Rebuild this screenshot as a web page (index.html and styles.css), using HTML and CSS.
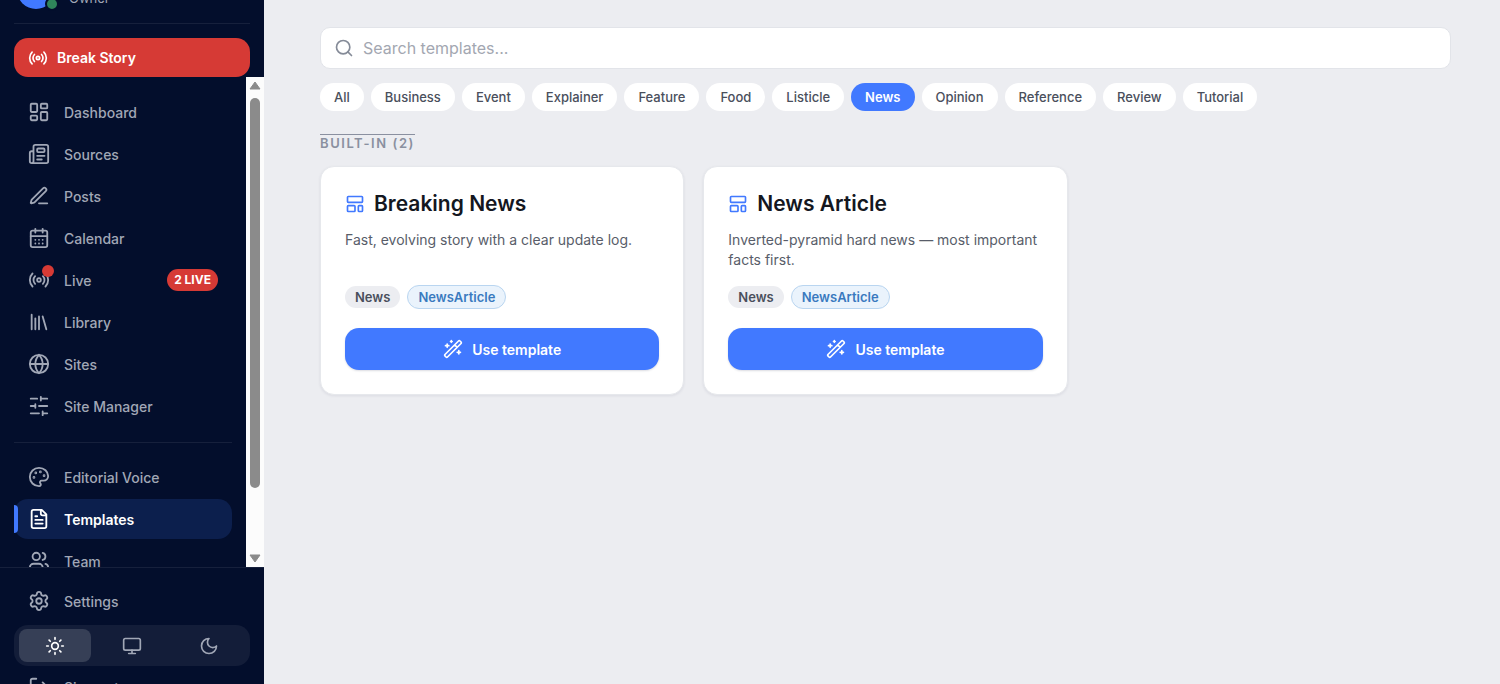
FILE: index.html
```html
<!DOCTYPE html>
<html lang="en">
<head>
    <meta charset="UTF-8">
    <meta name="viewport" content="width=device-width, initial-scale=1.0">
    <title>Templates</title>
    <link rel="stylesheet" href="styles.css">
</head>
<body>
    <div class="app">
        <aside class="sidebar">
            <!-- Signed-in user -->
            <div class="user">
                <div class="avatar"><span class="status"></span></div>
                <span class="role">Owner</span>
            </div>

            <button type="button" class="break-story">
                <svg class="icon icon-sm" viewBox="0 0 24 24"><path d="M16.247 7.761a6 6 0 0 1 0 8.478M19.075 4.933a10 10 0 0 1 0 14.134M4.925 19.067a10 10 0 0 1 0-14.134M7.753 16.239a6 6 0 0 1 0-8.478"/><circle cx="12" cy="12" r="2"/></svg>
                Break Story
            </button>

            <!-- Scrolling navigation -->
            <div class="nav-wrap">
                <nav class="nav">
                    <a href="#" class="nav-item">
                        <svg class="icon" viewBox="0 0 24 24"><rect width="7" height="9" x="3" y="3" rx="1"/><rect width="7" height="5" x="14" y="3" rx="1"/><rect width="7" height="9" x="14" y="12" rx="1"/><rect width="7" height="5" x="3" y="16" rx="1"/></svg>
                        Dashboard
                    </a>
                    <a href="#" class="nav-item">
                        <svg class="icon" viewBox="0 0 24 24"><path d="M15 18h-5M18 14h-8M4 22h16a2 2 0 0 0 2-2V4a2 2 0 0 0-2-2H8a2 2 0 0 0-2 2v16a2 2 0 0 1-4 0v-9a2 2 0 0 1 2-2h2"/><rect width="8" height="4" x="10" y="6" rx="1"/></svg>
                        Sources
                    </a>
                    <a href="#" class="nav-item">
                        <svg class="icon" viewBox="0 0 24 24"><path d="M12 20h9M16.376 3.622a1 1 0 0 1 3.002 3.002L7.368 18.635a2 2 0 0 1-.855.506l-2.872.838a.5.5 0 0 1-.62-.62l.838-2.872a2 2 0 0 1 .506-.854z"/></svg>
                        Posts
                    </a>
                    <a href="#" class="nav-item">
                        <svg class="icon" viewBox="0 0 24 24"><path d="M8 2v4M16 2v4M3 10h18M8 14h.01M12 14h.01M16 14h.01M8 18h.01M12 18h.01M16 18h.01"/><rect width="18" height="18" x="3" y="4" rx="2"/></svg>
                        Calendar
                    </a>
                    <a href="#" class="nav-item">
                        <span class="icon-wrap">
                            <svg class="icon" viewBox="0 0 24 24"><path d="M16.247 7.761a6 6 0 0 1 0 8.478M19.075 4.933a10 10 0 0 1 0 14.134M4.925 19.067a10 10 0 0 1 0-14.134M7.753 16.239a6 6 0 0 1 0-8.478"/><circle cx="12" cy="12" r="2"/></svg>
                            <span class="live-dot"></span>
                        </span>
                        Live
                        <span class="live-count">2 LIVE</span>
                    </a>
                    <a href="#" class="nav-item">
                        <svg class="icon" viewBox="0 0 24 24"><path d="m16 6 4 14M12 6v14M8 8v12M4 4v16"/></svg>
                        Library
                    </a>
                    <a href="#" class="nav-item">
                        <svg class="icon" viewBox="0 0 24 24"><circle cx="12" cy="12" r="10"/><path d="M12 2a14.5 14.5 0 0 0 0 20 14.5 14.5 0 0 0 0-20M2 12h20"/></svg>
                        Sites
                    </a>
                    <a href="#" class="nav-item">
                        <svg class="icon" viewBox="0 0 24 24"><path d="M21 4h-7M10 4H3M21 12h-9M8 12H3M21 20h-5M12 20H3M14 2v4M8 10v4M16 18v4"/></svg>
                        Site Manager
                    </a>
                    <hr class="nav-divider">
                    <a href="#" class="nav-item">
                        <svg class="icon" viewBox="0 0 24 24"><path d="M12 22a1 1 0 0 1 0-20 10 9 0 0 1 10 9 5 5 0 0 1-5 5h-2.25a1.75 1.75 0 0 0-1.4 2.8l.3.4a1.75 1.75 0 0 1-1.4 2.8z"/><g class="solid"><circle cx="13.5" cy="6.5" r=".5"/><circle cx="17.5" cy="10.5" r=".5"/><circle cx="6.5" cy="12.5" r=".5"/><circle cx="8.5" cy="7.5" r=".5"/></g></svg>
                        Editorial Voice
                    </a>
                    <a href="#" class="nav-item active">
                        <svg class="icon" viewBox="0 0 24 24"><path d="M15 2H6a2 2 0 0 0-2 2v16a2 2 0 0 0 2 2h12a2 2 0 0 0 2-2V7ZM14 2v4a2 2 0 0 0 2 2h4M10 9H8M16 13H8M16 17H8"/></svg>
                        Templates
                    </a>
                    <a href="#" class="nav-item">
                        <svg class="icon" viewBox="0 0 24 24"><path d="M16 21v-2a4 4 0 0 0-4-4H6a4 4 0 0 0-4 4v2M16 3.128a4 4 0 0 1 0 7.744M22 21v-2a4 4 0 0 0-3-3.87"/><circle cx="9" cy="7" r="4"/></svg>
                        Team
                    </a>
                </nav>
                <div class="scrollbar">
                    <svg class="arrow" viewBox="0 0 12 9"><path d="M6 1 11 8H1z"/></svg>
                    <div class="thumb"></div>
                    <svg class="arrow" viewBox="0 0 12 9"><path d="M6 8 1 1h10z"/></svg>
                </div>
            </div>

            <div class="sidebar-footer">
                <a href="#" class="nav-item">
                    <svg class="icon" viewBox="0 0 24 24"><path d="M9.671 4.136a2.34 2.34 0 0 1 4.659 0 2.34 2.34 0 0 0 3.319 1.915 2.34 2.34 0 0 1 2.33 4.033 2.34 2.34 0 0 0 0 3.831 2.34 2.34 0 0 1-2.33 4.033 2.34 2.34 0 0 0-3.319 1.915 2.34 2.34 0 0 1-4.659 0 2.34 2.34 0 0 0-3.32-1.915 2.34 2.34 0 0 1-2.33-4.033 2.34 2.34 0 0 0 0-3.831A2.34 2.34 0 0 1 6.35 6.051a2.34 2.34 0 0 0 3.319-1.915"/><circle cx="12" cy="12" r="3"/></svg>
                    Settings
                </a>
                <div class="theme-switch">
                    <button type="button" class="theme-btn selected" aria-label="Light">
                        <svg class="icon icon-sm" viewBox="0 0 24 24"><circle cx="12" cy="12" r="4"/><path d="M12 2v2M12 20v2M4.93 4.93l1.41 1.41M17.66 17.66l1.41 1.41M2 12h2M20 12h2M6.34 17.66l-1.41 1.41M19.07 4.93l-1.41 1.41"/></svg>
                    </button>
                    <button type="button" class="theme-btn" aria-label="System">
                        <svg class="icon icon-sm" viewBox="0 0 24 24"><rect width="20" height="14" x="2" y="3" rx="2"/><path d="M8 21h8M12 17v4"/></svg>
                    </button>
                    <button type="button" class="theme-btn" aria-label="Dark">
                        <svg class="icon icon-sm" viewBox="0 0 24 24"><path d="M12 3a6 6 0 0 0 9 9 9 9 0 1 1-9-9Z"/></svg>
                    </button>
                </div>
                <a href="#" class="nav-item">
                    <svg class="icon" viewBox="0 0 24 24"><path d="m16 17 5-5-5-5M21 12H9M9 21H5a2 2 0 0 1-2-2V5a2 2 0 0 1 2-2h4"/></svg>
                    Sign out
                </a>
            </div>
        </aside>

        <main class="content">
            <label class="search">
                <svg class="icon icon-sm" viewBox="0 0 24 24"><path d="m21 21-4.34-4.34"/><circle cx="11" cy="11" r="8"/></svg>
                <input type="search" placeholder="Search templates..." aria-label="Search templates">
            </label>

            <!-- Category filters -->
            <div class="filters">
                <button type="button" class="filter">All</button>
                <button type="button" class="filter">Business</button>
                <button type="button" class="filter">Event</button>
                <button type="button" class="filter">Explainer</button>
                <button type="button" class="filter">Feature</button>
                <button type="button" class="filter">Food</button>
                <button type="button" class="filter">Listicle</button>
                <button type="button" class="filter selected">News</button>
                <button type="button" class="filter">Opinion</button>
                <button type="button" class="filter">Reference</button>
                <button type="button" class="filter">Review</button>
                <button type="button" class="filter">Tutorial</button>
            </div>

            <h2 class="section-title">Built-in (2)</h2>

            <div class="cards">
                <article class="card">
                    <h3 class="card-title">
                        <svg class="icon icon-sm" viewBox="0 0 24 24"><rect width="18" height="7" x="3" y="3" rx="1"/><rect width="9" height="7" x="3" y="14" rx="1"/><rect width="5" height="7" x="16" y="14" rx="1"/></svg>
                        Breaking News
                    </h3>
                    <p class="card-text">Fast, evolving story with a clear update log.</p>
                    <div class="tags">
                        <span class="tag">News</span>
                        <span class="tag tag-schema">NewsArticle</span>
                    </div>
                    <button type="button" class="use-btn">
                        <svg class="icon icon-sm" viewBox="0 0 24 24"><path d="m21.64 3.64-1.28-1.28a1.21 1.21 0 0 0-1.72 0L2.36 18.64a1.21 1.21 0 0 0 0 1.72l1.28 1.28a1.2 1.2 0 0 0 1.72 0L21.64 5.36a1.2 1.2 0 0 0 0-1.72M14 7l3 3M5 6v4M19 14v4M10 2v2M7 8H3M21 16h-4M11 3H9"/></svg>
                        Use template
                    </button>
                </article>
                <article class="card">
                    <h3 class="card-title">
                        <svg class="icon icon-sm" viewBox="0 0 24 24"><rect width="18" height="7" x="3" y="3" rx="1"/><rect width="9" height="7" x="3" y="14" rx="1"/><rect width="5" height="7" x="16" y="14" rx="1"/></svg>
                        News Article
                    </h3>
                    <p class="card-text">Inverted-pyramid hard news — most important facts first.</p>
                    <div class="tags">
                        <span class="tag">News</span>
                        <span class="tag tag-schema">NewsArticle</span>
                    </div>
                    <button type="button" class="use-btn">
                        <svg class="icon icon-sm" viewBox="0 0 24 24"><path d="m21.64 3.64-1.28-1.28a1.21 1.21 0 0 0-1.72 0L2.36 18.64a1.21 1.21 0 0 0 0 1.72l1.28 1.28a1.2 1.2 0 0 0 1.72 0L21.64 5.36a1.2 1.2 0 0 0 0-1.72M14 7l3 3M5 6v4M19 14v4M10 2v2M7 8H3M21 16h-4M11 3H9"/></svg>
                        Use template
                    </button>
                </article>
            </div>
        </main>
    </div>
</body>
</html>
```
FILE: styles.css
```css
* {
    box-sizing: border-box;
}
body {
    margin: 0;
    font-family: Inter, "Liberation Sans", sans-serif;
    background: #ecedf1;
    color: #14171f;
}
button, input {
    font-family: inherit;
}
button {
    border: none;
    cursor: pointer;
}
.app {
    display: flex;
    height: 100vh;
}
.icon {
    display: block;
    flex: none;
    width: 22px;
    height: 22px;
    fill: none;
    stroke: currentColor;
    stroke-width: 2;
    stroke-linecap: round;
    stroke-linejoin: round;
}
.icon-sm {
    width: 20px;
    height: 20px;
}
.icon .solid {
    fill: currentColor;
}

/* Sidebar */
.sidebar {
    display: flex;
    flex-direction: column;
    flex: none;
    width: 264px;
    overflow: hidden;
    background: #030e2c;
    color: #a1a7b6;
}
.user {
    display: flex;
    flex: none;
    align-items: flex-end;
    gap: 14px;
    height: 56px;
    margin: -32px 14px 14px;
    padding: 0 3px 14px;
    border-bottom: 1px solid #16203c;
    font-size: 13px;
    line-height: 22px;
}
.avatar {
    position: relative;
    width: 38px;
    height: 38px;
    border-radius: 50%;
    background: #4179ff;
}
.status {
    position: absolute;
    right: -4px;
    bottom: -2px;
    width: 14px;
    height: 14px;
    border: 2px solid #030e2c;
    border-radius: 50%;
    background: #2f855a;
}
.break-story {
    display: flex;
    flex: none;
    align-items: center;
    gap: 9px;
    height: 39px;
    margin: 0 14px;
    padding: 0 14px;
    border-radius: 14px;
    background: #d63a35;
    color: #fff;
    font-size: 14px;
    font-weight: 600;
}
.nav-wrap {
    display: flex;
    flex: 1;
    min-height: 0;
}
.nav {
    display: flex;
    flex: 1;
    flex-direction: column;
    gap: 2px;
    overflow: hidden;
    padding: 15px 14px 0;
}
.nav-item {
    position: relative;
    display: flex;
    flex: none;
    align-items: center;
    gap: 14px;
    height: 40px;
    padding: 0 14px;
    border-radius: 14px;
    color: inherit;
    font-size: 14px;
    font-weight: 500;
    text-decoration: none;
}
.nav-item.active {
    background: #0c1f4d;
    color: #fff;
    font-weight: 600;
}
.nav-item.active::before {
    content: "";
    position: absolute;
    left: 0;
    top: 6px;
    width: 4px;
    height: 28px;
    border-radius: 0 4px 4px 0;
    background: #4179ff;
}
.nav-divider {
    flex: none;
    width: 100%;
    height: 1px;
    margin: 14px 0 12px;
    border: none;
    background: #16203c;
}
.icon-wrap {
    position: relative;
}
.live-dot {
    position: absolute;
    top: -4px;
    right: -4px;
    width: 12px;
    height: 12px;
    border-radius: 50%;
    background: #d63a35;
}
.live-count {
    margin-left: auto;
    padding: 0 7px;
    border-radius: 11px;
    background: #d63a35;
    color: #fff;
    font-size: 12px;
    font-weight: 700;
    line-height: 22px;
}
.scrollbar {
    display: flex;
    flex: none;
    flex-direction: column;
    align-items: center;
    width: 18px;
    padding: 4px 0;
    background: #fcfcfc;
}
.arrow {
    flex: none;
    width: 12px;
    height: 9px;
    fill: #8b8b8b;
    stroke: #8b8b8b;
    stroke-linejoin: round;
}
.thumb {
    width: 10px;
    height: 81%;
    margin: 8px 0 auto;
    border-radius: 5px;
    background: #8b8b8b;
}
.sidebar-footer {
    flex: none;
    height: 117px;
    padding: 13px 14px 0;
    border-top: 1px solid #16203c;
}
.theme-switch {
    display: flex;
    gap: 5px;
    margin: 4px 0 1px;
    padding: 4px 5px;
    border-radius: 14px;
    background: #131d39;
}
.theme-btn {
    display: flex;
    flex: 1;
    align-items: center;
    justify-content: center;
    height: 33px;
    border-radius: 8px;
    background: none;
    color: #a1a7b6;
}
.theme-btn.selected {
    background: #363f56;
    color: #fff;
}

/* Main content */
.content {
    flex: 1;
    min-width: 0;
    padding: 27px 49px 0 56px;
}
.search {
    display: flex;
    align-items: center;
    gap: 9px;
    height: 42px;
    padding: 0 13px;
    border: 1px solid #e2e4e9;
    border-radius: 10px;
    background: #fff;
    color: #858b98;
}
.search input {
    flex: 1;
    min-width: 0;
    padding: 0;
    border: none;
    outline: none;
    background: none;
    color: #14171f;
    font-size: 16px;
}
.search input::placeholder {
    color: #a3a7b1;
}
.filters {
    display: flex;
    flex-wrap: wrap;
    gap: 7px;
    margin-top: 14px;
}
.filter {
    height: 28px;
    padding: 0 14px;
    border-radius: 14px;
    background: #fff;
    color: #4a4f5c;
    font-size: 13px;
    font-weight: 500;
}
.filter.selected {
    background: #4179ff;
    color: #fff;
    font-weight: 600;
}
.section-title {
    width: fit-content;
    margin: 22px 0 13px;
    color: #8a90a0;
    font-size: 13px;
    font-weight: 600;
    line-height: 20px;
    letter-spacing: 0.12em;
    text-decoration: overline;
    text-transform: uppercase;
}
.cards {
    display: grid;
    grid-template-columns: repeat(3, 1fr);
    gap: 19px;
}
.card {
    display: flex;
    flex-direction: column;
    padding: 24px;
    border: 1px solid #e6e8ec;
    border-radius: 14px;
    background: #fff;
    box-shadow: 0 1px 3px rgba(20, 30, 60, 0.08);
}
.card-title {
    display: flex;
    align-items: center;
    gap: 9px;
    margin: 0 0 13px;
    font-size: 21px;
    font-weight: 600;
    line-height: 26px;
}
.card-title .icon {
    color: #4179ff;
}
.card-text {
    min-height: 40px;
    margin: 0 0 15px;
    color: #585d69;
    font-size: 14px;
    line-height: 20px;
}
.tags {
    display: flex;
    align-items: center;
    gap: 7px;
    margin-bottom: 19px;
}
.tag {
    padding: 0 10px;
    border-radius: 12px;
    background: #ecedf1;
    color: #4a4f5c;
    font-size: 13px;
    font-weight: 600;
    line-height: 22px;
}
.tag-schema {
    border: 1px solid #b9d5f0;
    background: #eaf3fc;
    color: #3a7abf;
}
.use-btn {
    display: flex;
    align-items: center;
    justify-content: center;
    gap: 9px;
    height: 42px;
    border-radius: 14px;
    background: #4179ff;
    color: #fff;
    font-size: 14px;
    font-weight: 600;
    box-shadow: 0 1px 2px rgba(20, 30, 60, 0.15);
}
```
